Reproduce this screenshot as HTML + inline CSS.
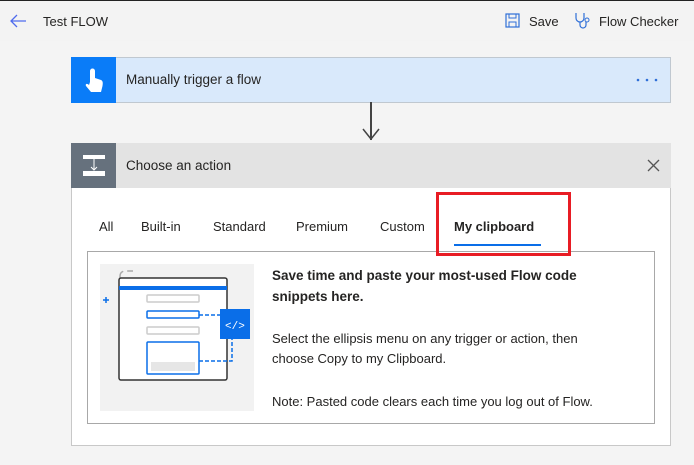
<!DOCTYPE html>
<html><head><style>
*{margin:0;padding:0;box-sizing:border-box}
body{width:694px;height:465px;background:#f4f4f4;font-family:"Liberation Sans",sans-serif;color:#252423;position:relative;overflow:hidden;font-size:13px}
.a{position:absolute}
</style></head><body>
<div class="a" style="left:0;top:0;width:694px;height:1px;background:#222"></div>
<div class="a" style="left:0;top:1px;width:694px;height:40px;background:#f3f3f3"></div>
<svg class="a" style="left:9px;top:13px" width="18" height="16" viewBox="0 0 18 16"><path d="M17 8H2M8 2L2 8l6 6" stroke="#4f6bed" stroke-width="1.3" fill="none"/></svg>
<div class="a" style="left:43px;top:14px;font-size:13px">Test FLOW</div>
<svg class="a" style="left:505px;top:13px" width="15" height="15" viewBox="0 0 15 15"><rect x="1" y="1" width="13" height="13" stroke="#2f6fd8" stroke-width="1.2" fill="none"/><rect x="4" y="1" width="7" height="4" stroke="#2f6fd8" fill="none"/><rect x="4" y="9" width="7" height="5" stroke="#2f6fd8" fill="none"/></svg>
<div class="a" style="left:529px;top:14px">Save</div>
<svg class="a" style="left:574px;top:12px" width="18" height="18" viewBox="0 0 18 18"><path d="M2 1v5a4 4 0 0 0 8 0V1M6 10v3a3 3 0 0 0 6 0v-3" stroke="#2f6fd8" stroke-width="1.2" fill="none"/><circle cx="13" cy="8" r="2" stroke="#2f6fd8" fill="none"/></svg>
<div class="a" style="left:599px;top:14px">Flow Checker</div>

<div class="a" style="left:71px;top:57px;width:600px;height:46px;background:#d9e9fb;border:1px solid #c0c8d0"></div>
<div class="a" style="left:71px;top:57px;width:45px;height:46px;background:#0a7cf8"></div>
<svg class="a" style="left:83px;top:66px" width="22" height="28" viewBox="0 0 22 28"><path d="M7 16V5a2.5 2.5 0 0 1 5 0v7l6 2c2 1 2 3 1.5 6L18 26H8l-5-6c-1-2 1-3 3-1z" fill="#fff"/></svg>
<div class="a" style="left:126px;top:72px;font-size:13.5px">Manually trigger a flow</div>
<svg class="a" style="left:636px;top:78px" width="24" height="4"><circle cx="2" cy="2" r="1.3" fill="#2f6fd8"/><circle cx="11" cy="2" r="1.3" fill="#2f6fd8"/><circle cx="20" cy="2" r="1.3" fill="#2f6fd8"/></svg>

<div class="a" style="left:370px;top:102px;width:1.5px;height:38px;background:#444"></div>
<svg class="a" style="left:362px;top:128px" width="18" height="14"><path d="M1 1l8 10 8-10" stroke="#444" stroke-width="1.5" fill="none"/></svg>

<div class="a" style="left:71px;top:143px;width:600px;height:303px;background:#fff;border:1px solid #c8c8c8"></div>
<div class="a" style="left:71px;top:143px;width:600px;height:45px;background:#e3e3e3"></div>
<div class="a" style="left:71px;top:143px;width:45px;height:45px;background:#66717d"></div>
<svg class="a" style="left:82px;top:154px" width="24" height="24" viewBox="0 0 24 24"><rect x="1" y="1" width="22" height="4" fill="#fff"/><rect x="1" y="17" width="22" height="5" fill="#fff"/><path d="M12 5v11M9 13l3 3 3-3" stroke="#fff" fill="none"/></svg>
<div class="a" style="left:126px;top:158px;font-size:13.5px">Choose an action</div>
<svg class="a" style="left:647px;top:159px" width="13" height="13"><path d="M1 1l11 11M12 1L1 12" stroke="#555" stroke-width="1.3"/></svg>

<div class="a" style="left:99px;top:219px">All</div>
<div class="a" style="left:141px;top:219px">Built-in</div>
<div class="a" style="left:213px;top:219px">Standard</div>
<div class="a" style="left:296px;top:219px">Premium</div>
<div class="a" style="left:380px;top:219px">Custom</div>
<div class="a" style="left:454px;top:219px;font-weight:bold">My clipboard</div>
<div class="a" style="left:454px;top:244px;width:87px;height:2px;background:#0a6ee8"></div>

<div class="a" style="left:87px;top:251px;width:568px;height:173px;border:1px solid #a8a8a8"></div>
<div class="a" style="left:436px;top:192px;width:135px;height:64px;border:3px solid #e81c24"></div>

<div class="a" style="left:100px;top:264px;width:154px;height:147px;background:#f2f2f2"></div>
<svg class="a" style="left:100px;top:264px" width="154" height="147" viewBox="0 0 154 147">
<path d="M20 30V12a5 5 0 0 1 5-5h8" stroke="#aaa" stroke-width="1.5" fill="none" stroke-dasharray="10 4"/>
<path d="M3 36h6M6 33v6" stroke="#0a6ee8" stroke-width="1.5"/>
<rect x="19" y="14" width="108" height="102" rx="2" fill="#fff" stroke="#333" stroke-width="1.5"/>
<rect x="19" y="22" width="108" height="4" fill="#0a6ee8"/>
<rect x="47" y="31" width="52" height="7" rx="1" fill="none" stroke="#ccc" stroke-width="1.5"/>
<rect x="47" y="47" width="52" height="7" rx="1" fill="none" stroke="#0a6ee8" stroke-width="1.5"/>
<rect x="47" y="63" width="52" height="7" rx="1" fill="none" stroke="#ccc" stroke-width="1.5"/>
<rect x="47" y="78" width="52" height="32" rx="1" fill="none" stroke="#0a6ee8" stroke-width="1.5"/>
<rect x="51" y="98" width="44" height="9" fill="#e6e6e6"/>
<path d="M99 51h30M99 97h33V72" stroke="#0a6ee8" stroke-width="1.5" stroke-dasharray="4 2" fill="none"/>
<rect x="120" y="45" width="30" height="30" fill="#0a6ee8"/>
<text x="125" y="65" fill="#fff" font-size="11" font-family="Liberation Mono">&lt;/&gt;</text>
</svg>

<div class="a" style="left:272px;top:265px;width:345px;font-weight:bold;font-size:13.5px;line-height:21px">Save time and paste your most-used Flow code snippets here.</div>
<div class="a" style="left:272px;top:329px;width:330px;line-height:20px">Select the ellipsis menu on any trigger or action, then choose Copy to my Clipboard.</div>
<div class="a" style="left:272px;top:394px">Note: Pasted code clears each time you log out of Flow.</div>
</body></html>
